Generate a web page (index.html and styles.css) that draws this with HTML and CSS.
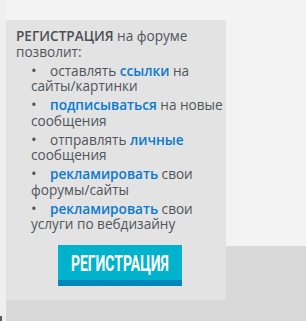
FILE: index.html
```html
<!DOCTYPE html>
<html lang="ru">
<head>
<meta charset="utf-8">
<link rel="stylesheet" href="styles.css">
</head>
<body>
<div class="strip"><span class="mark"></span></div>
<div class="main">
  <div class="panel">
    <p class="intro"><b class="title">РЕГИСТРАЦИЯ</b> на форуме позволит:</p>
    <ul class="list">
      <li>оставлять <b class="hl">ссылки</b> на сайты/картинки</li>
      <li><b class="hl">подписываться</b> на новые сообщения</li>
      <li>отправлять <b class="hl">личные</b> сообщения</li>
      <li><b class="hl">рекламировать</b> свои форумы/сайты</li>
      <li><b class="hl">рекламировать</b> свои услуги по вебдизайну</li>
    </ul>
    <div class="btn-row"><a class="btn" href="#"><span class="btn-text">РЕГИСТРАЦИЯ</span></a></div>
  </div>
</div>
</body>
</html>
```
FILE: styles.css
```css
html, body {
  margin: 0;
  padding: 0;
  height: 100%;
}
body {
  display: flex;
  font-family: "Open Sans", "DejaVu Sans", sans-serif;
  font-size: 13.6px;
  line-height: 15.6px;
  color: #50555a;
  background: #d9d9d9;
}
.strip {
  width: 6px;
  flex: none;
  background: #efefef;
  display: flex;
  flex-direction: column;
  justify-content: flex-end;
}
.mark {
  display: block;
  width: 2px;
  height: 5px;
  background: #5a5a5a;
}
.main {
  flex: 1;
  background: linear-gradient(to bottom, #f3f3f3 246px, #d9d9d9 246px);
  padding-top: 20px;
}
.panel {
  width: 220px;
  box-sizing: border-box;
  background: #e3e3e3;
  padding: 8px 2px 14px 10px;
}
.intro {
  margin: 0;
}
.title {
  font-weight: 600;
  color: #4a4f55;
}
.list {
  list-style: none;
  margin: 0;
  padding: 0 0 0 15px;
}
.list li {
  margin-top: 3.4px;
}
.list li::before {
  content: "•";
  display: inline-block;
  width: 19px;
  font-size: 15px;
  color: #50555a;
}
.hl {
  font-weight: 600;
  color: #0a7ad0;
}
.btn-row {
  display: flex;
  justify-content: center;
  margin-top: 13px;
}
.btn {
  display: flex;
  align-items: center;
  justify-content: center;
  width: 124px;
  height: 35px;
  background: #00b2cc;
  border-bottom: 6px solid #0088bc;
  text-decoration: none;
  overflow: hidden;
}
.btn-text {
  display: inline-block;
  font-family: "Roboto", "Liberation Sans", sans-serif;
  font-weight: 700;
  font-size: 22.5px;
  line-height: 1;
  color: #ffffff;
  transform: scaleX(0.62);
  white-space: nowrap;
  padding-top: 2px;
}
```
